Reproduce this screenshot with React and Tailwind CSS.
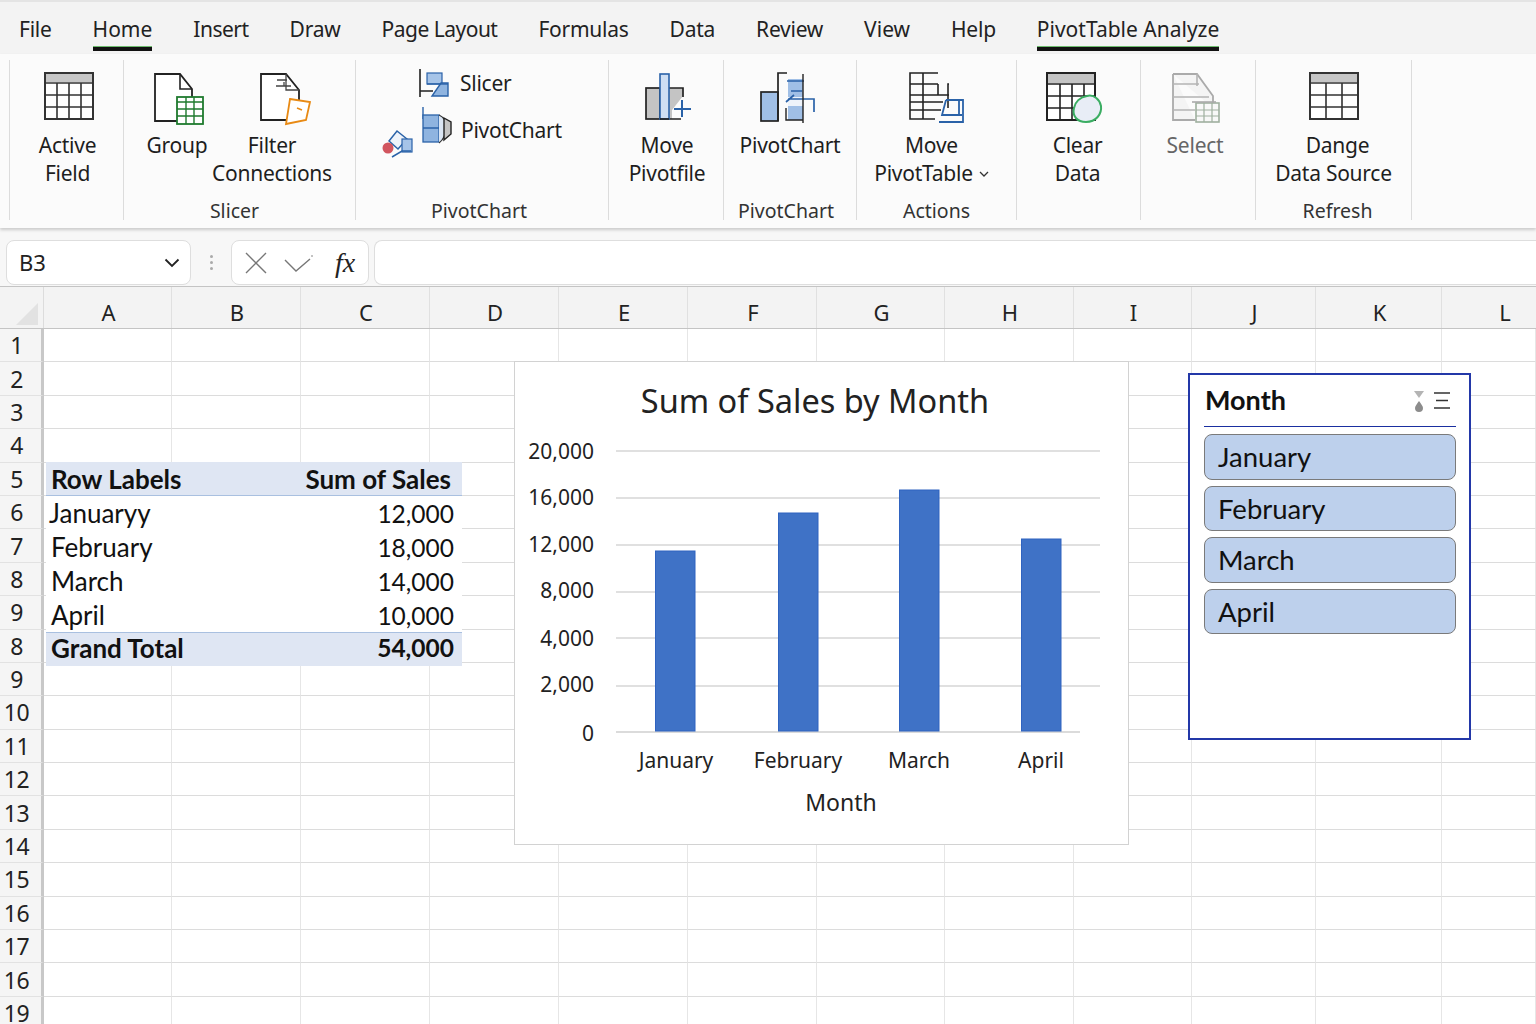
const tabs = [
  ["File", "tracking-[-0.25px]"],
  ["Home", ""],
  ["Insert", "tracking-[-0.5px]"],
  ["Draw", "tracking-[-0.25px]"],
  ["Page Layout", "tracking-[-0.5px]"],
  ["Formulas", "tracking-[-0.25px]"],
  ["Data", "tracking-[-0.25px]"],
  ["Review", "tracking-[-0.25px]"],
  ["View", ""],
  ["Help", "tracking-[-0.25px]"],
  ["PivotTable Analyze", ""],
];
const columns = ["A", "B", "C", "D", "E", "F", "G", "H", "I", "J", "K", "L"];
const rowLabels = [1, 2, 3, 4, 5, 6, 7, 8, 9, 8, 9, 10, 11, 12, 13, 14, 15, 16, 17, 16, 19];
const colTemplate = "grid-cols-[44px_128px_129px_129px_129px_129px_129px_128px_129px_118px_124px_126px_94px]";
const sales = [
  ["Januaryy", "12,000", "pl-[3px]"],
  ["February", "18,000", "pl-[5px]"],
  ["March", "14,000", "pl-[5px]"],
  ["April", "10,000", "pl-[5px]"],
];
const months = ["January", "February", "March", "April"];
// label, gridline y, label baseline y
const ticks = [["20,000", 90, 97], ["16,000", 137, 143], ["12,000", 184, 190], ["8,000", 231, 236], ["4,000", 277, 284], ["2,000", 325, 330]];
const bars = [[140.5, 190, 180], [263.5, 152, 218], [384.5, 129, 241], [506.5, 178, 192]];

const TableIcon = ({ wide }) => (
  <svg width="50" height="49" viewBox="0 0 50 49" fill="none">
    <rect x="1" y="1" width="48" height="46" fill="#fff" stroke="#333" strokeWidth="2" />
    <rect x="2" y="2" width="46" height="8" fill="#c6c6c6" />
    <path d="M1 11H49M1 23H49M1 35H49" stroke="#333" strokeWidth="1.6" />
    <path d={wide ? "M17 11V47M33 11V47" : "M13 11V47M25 11V47M37 11V47"} stroke="#333" strokeWidth="1.6" />
  </svg>
);

const GroupIcon = () => (
  <svg width="52" height="54" viewBox="0 0 52 54" fill="none">
    <path d="M2 2H27L39 17V49H2Z" fill="#fff" stroke="#222" strokeWidth="1.8" />
    <path d="M27 2V17H39" stroke="#222" strokeWidth="1.6" />
    <rect x="24" y="25" width="26" height="27" fill="#fff" stroke="#1f7a2e" strokeWidth="1.8" />
    <path d="M24 30H50M24 37H50M24 44H50M33 25V52M41 25V52" stroke="#1f7a2e" strokeWidth="1.4" />
  </svg>
);

const FilterIcon = () => (
  <svg width="54" height="54" viewBox="0 0 54 54" fill="none">
    <path d="M2 2H27L40 18V48H2Z" fill="#fff" stroke="#222" strokeWidth="1.8" />
    <path d="M27 2V18H40M18 8H28M17 14H32M25 10V14" stroke="#444" strokeWidth="1.3" />
    <path d="M31 27L51 30L47 48L27 52Z" fill="#fff" stroke="#e88a14" strokeWidth="1.8" />
    <path d="M38 36L43 38" stroke="#e88a14" strokeWidth="1.5" />
  </svg>
);

const SmallSlicerIcon = () => (
  <svg width="30" height="29" viewBox="0 0 30 29" fill="none">
    <path d="M1 0V28M1 22H14" stroke="#222" strokeWidth="1.6" />
    <rect x="8" y="4" width="15" height="11" fill="#a6c4e8" stroke="#2a62a8" strokeWidth="1.2" />
    <path d="M29 14V27H13L22 14Z" fill="#8fb4e0" stroke="#2a62a8" strokeWidth="1.4" />
    <path d="M8 15H29" stroke="#2a62a8" strokeWidth="1.4" />
  </svg>
);

const SmallPivotIcon = () => (
  <svg width="30" height="37" viewBox="0 0 30 37" fill="none">
    <path d="M1 0V12" stroke="#2a62a8" strokeWidth="1.4" />
    <rect x="1" y="8" width="16" height="27" fill="#8fb4e0" stroke="#2a62a8" strokeWidth="1.3" />
    <path d="M1 21H17" stroke="#2a62a8" strokeWidth="1.5" />
    <path d="M17 8C22 10 24 14 24 20C24 28 21 33 17 36" fill="#dbe6f4" stroke="#333" strokeWidth="1.2" />
    <path d="M22 11L29 15V27L22 33Z" fill="#c4c4c4" stroke="#222" strokeWidth="1.4" />
  </svg>
);

const SmallShapesIcon = () => (
  <svg width="31" height="30" viewBox="0 0 31 30" fill="none">
    <path d="M7 12L15 2L25 10L16 20Z" fill="#eef3fa" stroke="#2a62a8" strokeWidth="1.5" />
    <rect x="20" y="10" width="10" height="13" fill="#a6c4e8" stroke="#2a62a8" strokeWidth="1.2" />
    <path d="M10 28L20 22H29" stroke="#2a62a8" strokeWidth="1.5" />
    <circle cx="6" cy="19" r="5.5" fill="#d1555f" />
  </svg>
);

const MovePivotIcon = () => (
  <svg width="46" height="48" viewBox="0 0 46 48" fill="none">
    <rect x="1" y="16" width="14" height="31" fill="#c4c4c4" stroke="#222" strokeWidth="1.7" />
    <path d="M24 16H38V24L27 38V47H24Z" fill="#c4c4c4" />
    <path d="M24 16H38V25M24 47H36" stroke="#222" strokeWidth="1.7" />
    <rect x="15" y="2" width="9" height="45" fill="#cfdff3" stroke="#2a62a8" strokeWidth="1.6" />
    <path d="M15 47H24" stroke="#222" strokeWidth="1.7" />
    <path d="M29 37H46M37 28V45" stroke="#2a62a8" strokeWidth="2" />
  </svg>
);

const BigPivotIcon = () => (
  <svg width="56" height="52" viewBox="0 0 56 52" fill="none">
    <rect x="1" y="20" width="17" height="29" fill="#a0bfe6" stroke="#222" strokeWidth="1.7" />
    <path d="M18 49V1H27" stroke="#222" strokeWidth="1.7" />
    <rect x="28" y="7" width="15" height="41" fill="#a0bfe6" />
    <path d="M28 25H44V34H28Z" fill="#eef3fa" />
    <path d="M27 9H44M31 19H42M26 30L34 23M28 27H54V40" stroke="#2a62a8" strokeWidth="1.7" />
    <path d="M26 36V48H43M43 2V51" stroke="#222" strokeWidth="1.4" />
  </svg>
);

const MoveTableIcon = () => (
  <svg width="56" height="52" viewBox="0 0 56 52" fill="none">
    <path d="M29 1H1V47H26M1 12H29M1 23H40M1 30H34M1 38H32M14 1V47M29 12V23M40 12H39V36" stroke="#222" strokeWidth="1.6" />
    <path d="M37 28H54V50H30" stroke="#2a62a8" strokeWidth="1.8" />
    <path d="M37 28L33 43H53M50 28V43" stroke="#2a62a8" strokeWidth="1.8" />
  </svg>
);

const ClearIcon = () => (
  <svg width="58" height="52" viewBox="0 0 58 52" fill="none">
    <rect x="1" y="1" width="48" height="47" fill="#fff" stroke="#222" strokeWidth="2" />
    <rect x="2" y="2" width="46" height="9" fill="#c4c4c4" />
    <path d="M1 12H49M1 24H49M1 36H49M14 12V48M26 12V48M38 12V30" stroke="#222" strokeWidth="1.6" />
    <path d="M41 24C48 22 54 28 55 34C56 42 50 50 40 50C31 50 26 44 28 36C29 30 34 25 41 24Z" fill="#e8edf6" stroke="#3aad62" strokeWidth="2" />
  </svg>
);

const SelectIcon = () => (
  <svg width="50" height="52" viewBox="0 0 50 52" fill="none">
    <path d="M2 2H26L42 24V36M2 2V48H24" fill="#f4f4f4" stroke="#aaa" strokeWidth="1.8" />
    <path d="M2 12H28M2 25H38M2 38H24M26 2V14" stroke="#b4b4b4" strokeWidth="1.6" />
    <rect x="25" y="31" width="23" height="19" fill="#f8f8f8" stroke="#9fb09f" strokeWidth="1.6" />
    <path d="M25 38H48M25 44H48M33 31V50M41 31V50" stroke="#9fb09f" strokeWidth="1.2" />
    <path d="M21 30H45" stroke="#aaa" strokeWidth="1.6" />
  </svg>
);

const RibbonButton = ({ icon, lines, width, muted, chevron, firstLineClass = "" }) => (
  <div className={`flex flex-col items-center ${width}`}>
    <div className="flex h-[59px] items-start justify-center">{icon}</div>
    {lines.map((line, i) => (
      <div key={line} className={`flex items-center whitespace-nowrap text-[21px] leading-[28px] tracking-[-0.25px] ${muted ? "text-[#666]" : "text-[#1e1e1e]"} ${i === 0 ? firstLineClass : ""}`}>
        {line}
        {chevron && i === lines.length - 1 && (
          <svg className="ml-[6px] mt-[2px]" width="10" height="6" viewBox="0 0 10 6" fill="none">
            <path d="M1 1L5 5L9 1" stroke="#333" strokeWidth="1.3" />
          </svg>
        )}
      </div>
    ))}
  </div>
);

const RibbonGroup = ({ width, label, labelClass = "", contentClass = "", children }) => (
  <div className={`flex h-[160px] shrink-0 flex-col border-r border-[#dcdcdc] ${width}`}>
    <div className={`flex flex-1 items-start pt-[12px] ${contentClass}`}>{children}</div>
    <div className={`h-[22px] text-center text-[19.5px] leading-[26px] text-[#333] ${labelClass}`}>{label}</div>
  </div>
);

const Ribbon = () => (
  <div className="relative z-10 flex h-[174px] bg-[#fbfbfb] pl-[9px] pt-[6px] shadow-[0_2px_3px_rgba(0,0,0,0.18)]">
    <div className="h-[160px] border-l border-[#dcdcdc]" />
    <RibbonGroup width="w-[114px]" contentClass="justify-center pl-[2px]">
      <RibbonButton icon={<div className="pl-[2px]"><TableIcon /></div>} lines={["Active", "Field"]} width="w-[100px]" />
    </RibbonGroup>
    <RibbonGroup width="w-[232px]" label="Slicer" labelClass="pr-[10px]" contentClass="pl-[13px]">
      <RibbonButton icon={<div className="pl-[4px]"><GroupIcon /></div>} lines={["Group"]} width="w-[80px]" />
      <RibbonButton icon={<div className="pl-[28px]"><FilterIcon /></div>} lines={["Filter", "Connections"]} width="w-[140px] -ml-[15px]" />
    </RibbonGroup>
    <RibbonGroup width="w-[253px]" label="PivotChart" labelClass="pr-[6px]" contentClass="flex-col !pt-[8px]">
      <div className="flex items-center gap-[11px] pl-[63px] text-[21px] tracking-[-0.25px] text-[#1e1e1e]">
        <SmallSlicerIcon />
        <span>Slicer</span>
      </div>
      <div className="mt-[7px] flex items-start pl-[26px] text-[21px] tracking-[-0.25px] text-[#1e1e1e]">
        <div className="mt-[22px]"><SmallShapesIcon /></div>
        <div className="ml-[9px]"><SmallPivotIcon /></div>
        <span className="ml-[9px] mt-[8px]">PivotChart</span>
      </div>
    </RibbonGroup>
    <RibbonGroup width="w-[115px]" contentClass="justify-center pl-[2px]">
      <RibbonButton icon={<div className="pl-[2px]"><MovePivotIcon /></div>} lines={["Move", "Pivotfile"]} width="w-[100px]" />
    </RibbonGroup>
    <RibbonGroup width="w-[133px]" label="PivotChart" labelClass="pr-[8px]" contentClass="justify-center">
      <RibbonButton icon={<div className="pr-[4px]"><BigPivotIcon /></div>} lines={["PivotChart"]} width="w-[120px]" />
    </RibbonGroup>
    <RibbonGroup width="w-[160px]" label="Actions" contentClass="justify-center pr-[10px]">
      <RibbonButton icon={<div className="pl-[10px]"><MoveTableIcon /></div>} lines={["Move", "PivotTable"]} width="w-[130px]" chevron />
    </RibbonGroup>
    <RibbonGroup width="w-[124px]" contentClass="justify-center pr-[2px]">
      <RibbonButton icon={<div className="pr-[6px]"><ClearIcon /></div>} lines={["Clear", "Data"]} width="w-[100px]" />
    </RibbonGroup>
    <RibbonGroup width="w-[115px]" contentClass="justify-center pr-[6px]">
      <RibbonButton icon={<div className="pl-[2px]"><SelectIcon /></div>} lines={["Select"]} width="w-[90px]" muted />
    </RibbonGroup>
    <RibbonGroup width="w-[156px]" label="Refresh" labelClass="pl-[8px]" contentClass="justify-center">
      <RibbonButton icon={<TableIcon wide />} lines={["Dange", "Data Source"]} width="w-[140px]" firstLineClass="pl-[8px]" />
    </RibbonGroup>
  </div>
);

const FormulaBar = () => (
  <div className="flex h-[58px] items-start gap-[5px] bg-[#f7f7f7] pl-[6px] pt-[12px]">
    <div className="flex h-[45px] w-[185px] items-center justify-between rounded-lg border border-[#dedede] bg-white pl-[12px] pr-[10px] text-[22px] text-[#222]">
      B3
      <svg width="16" height="10" viewBox="0 0 16 10" fill="none">
        <path d="M1.5 1.5L8 8L14.5 1.5" stroke="#222" strokeWidth="1.8" />
      </svg>
    </div>
    <div className="flex h-[45px] w-[30px] flex-col items-center justify-center gap-[3px]">
      <span className="h-[3px] w-[3px] rounded-full bg-[#aaa]" />
      <span className="h-[3px] w-[3px] rounded-full bg-[#aaa]" />
      <span className="h-[3px] w-[3px] rounded-full bg-[#aaa]" />
    </div>
    <div className="flex h-[45px] w-[138px] items-center rounded-lg border border-[#dedede] bg-white pl-[12px]">
      <svg width="24" height="24" viewBox="0 0 24 24" fill="none">
        <path d="M2 2L22 22M22 2L2 22" stroke="#777" strokeWidth="1.4" />
      </svg>
      <svg className="ml-[16px]" width="30" height="20" viewBox="0 0 30 20" fill="none">
        <path d="M1 7L12 18L26 6" stroke="#777" strokeWidth="1.4" />
        <circle cx="28" cy="3" r="0.8" fill="#777" />
      </svg>
      <span className="ml-[21px] font-['Liberation_Serif',serif] text-[28px] italic leading-none text-[#222]">fx</span>
    </div>
    <div className="h-[45px] flex-1 rounded-l-lg border border-r-0 border-[#dedede] bg-white" />
  </div>
);

const ColumnHeaders = () => (
  <div className={`grid h-[43px] ${colTemplate} border-y border-[#c4c4c4] bg-[#f3f3f3]`}>
    <div className="relative border-r border-[#dcdcdc]">
      {/* select-all corner */}
      <div className="absolute bottom-[3px] right-[5px] h-0 w-0 border-b-[22px] border-l-[22px] border-b-[#e2e2e2] border-l-transparent" />
    </div>
    {columns.map((col) => (
      <div key={col} className="flex items-end justify-center border-r border-[#e0e0e0] pb-[1px] pl-[2px] text-[22px] leading-[30px] text-[#222] last:border-r-0 last:pl-[32px]">
        {col}
      </div>
    ))}
  </div>
);

const SheetGrid = () => (
  <div className={`grid ${colTemplate} auto-rows-[33.4px]`}>
    {rowLabels.map((label, i) => (
      <div key={i} className="contents">
        <div className="flex items-center justify-center border-b border-r-[3px] border-b-[#e2e2e2] border-r-[#c8c8c8] bg-[#f5f5f5] pr-[8px] text-[23px] leading-[22px] tracking-[-0.5px] text-[#222]">
          {label}
        </div>
        {columns.map((col) => (
          <div key={col} className="border-b border-r border-b-[#dcdcdc] border-r-[#e6e6e6]" />
        ))}
      </div>
    ))}
  </div>
);

const PivotTable = () => (
  <div className="absolute left-[46px] top-[133px] w-[416px] bg-white font-['Lato',sans-serif] text-[26px] leading-[35px] text-[#111]">
    <div className="flex h-[34px] justify-between border-b border-[#a9c0e0] bg-[#dfe6f3] pl-[5px] pr-[11px] font-bold">
      <span>Row Labels</span>
      <span>Sum of Sales</span>
    </div>
    {sales.map(([name, value, pad]) => (
      <div key={name} className={`flex h-[34px] justify-between pr-[8px] ${pad}`}>
        <span>{name}</span>
        <span className="text-[24.5px]">{value}</span>
      </div>
    ))}
    <div className="flex h-[34px] justify-between border-t border-[#a9c0e0] bg-[#dfe6f3] pl-[5px] pr-[8px] font-bold leading-[30px]">
      <span>Grand Total</span>
      <span className="text-[24.5px]">54,000</span>
    </div>
  </div>
);

const SalesChart = () => (
  <div className="absolute left-[514px] top-[32px] h-[484px] w-[615px] border border-[#d2d2d2] bg-white font-['Noto_Sans',sans-serif] text-[#222]">
    <svg width="613" height="482" viewBox="0 0 613 482" className="block">
      <text x="300" y="51" textAnchor="middle" fontSize="32.5" fill="#222">Sum of Sales by Month</text>
      {ticks.map(([label, y, labelY]) => (
        <g key={label}>
          <line x1="101" x2="585" y1={y - 1} y2={y - 1} stroke="#d6d6d6" strokeWidth="1.5" />
          <text x="79" y={labelY} textAnchor="end" fontSize="21" fill="#222">{label}</text>
        </g>
      ))}
      <line x1="101" x2="565" y1="370" y2="370" stroke="#cfcfcf" strokeWidth="1.5" />
      <text x="79" y="379" textAnchor="end" fontSize="21" fill="#222">0</text>
      {bars.map(([x, y, h]) => (
        <rect key={x} x={x} y={y - 1} width="39.5" height={h} fill="#3f72c6" stroke="#2f63c0" strokeWidth="1" />
      ))}
      {months.map((month, i) => (
        <text key={month} x={[161, 283, 404, 526][i]} y="406" textAnchor="middle" fontSize="21" fill="#222">{month}</text>
      ))}
      <text x="326" y="449" textAnchor="middle" fontSize="23" fill="#222">Month</text>
    </svg>
  </div>
);

const Slicer = () => (
  <div className="absolute left-[1188px] top-[44px] h-[367px] w-[283px] border-2 border-[#2338a8] bg-white pl-[14px] pr-[13px] font-['Lato',sans-serif] text-[#111]">
    <div className="flex h-[52px] items-center justify-between border-b border-[#1a2fa0] pl-[1px] pr-[4px]">
      <span className="text-[27px] font-bold">Month</span>
      <svg width="38" height="22" viewBox="0 0 38 22" fill="none">
        <path d="M0 1H10L5 8Z" fill="#b4b4b4" />
        <path d="M5 11C7 14 9 16 9 18A4 4 0 0 1 1 18C1 16 3 14 5 11Z" fill="#8c8c8c" />
        <path d="M20 3H36M22 10.5H34M20 18H36" stroke="#333" strokeWidth="1.6" />
      </svg>
    </div>
    <div className="mt-[7px] flex flex-col gap-[6px]">
      {months.map((month) => (
        <div key={month} className="flex h-[45.5px] items-center rounded-lg border border-[#7a7a7a] bg-[#bdd0ec] pl-[13px] text-[27.5px]">
          {month}
        </div>
      ))}
    </div>
  </div>
);

export default function App() {
  return (
    <div className="h-[1024px] w-[1536px] overflow-hidden bg-white font-['Noto_Sans',sans-serif]">
      <div className="flex h-[54px] gap-[41px] border-t-2 border-[#e4e4e4] bg-[#f3f3f3] pl-[19px] pt-[10px] text-[21px] leading-[34px] text-[#222]">
        {tabs.map(([tab, spacing]) => (
          <div key={tab} className={`relative h-[39px] ${spacing}`}>
            {tab}
            {(tab === "Home" || tab === "PivotTable Analyze") && (
              <div className="absolute bottom-0 left-0 right-0 h-[5px] border-t border-[#6dbb6d] bg-[#111]" />
            )}
          </div>
        ))}
      </div>
      <Ribbon />
      <FormulaBar />
      <ColumnHeaders />
      <div className="relative">
        <SheetGrid />
        <PivotTable />
        <SalesChart />
        <Slicer />
      </div>
    </div>
  );
}
